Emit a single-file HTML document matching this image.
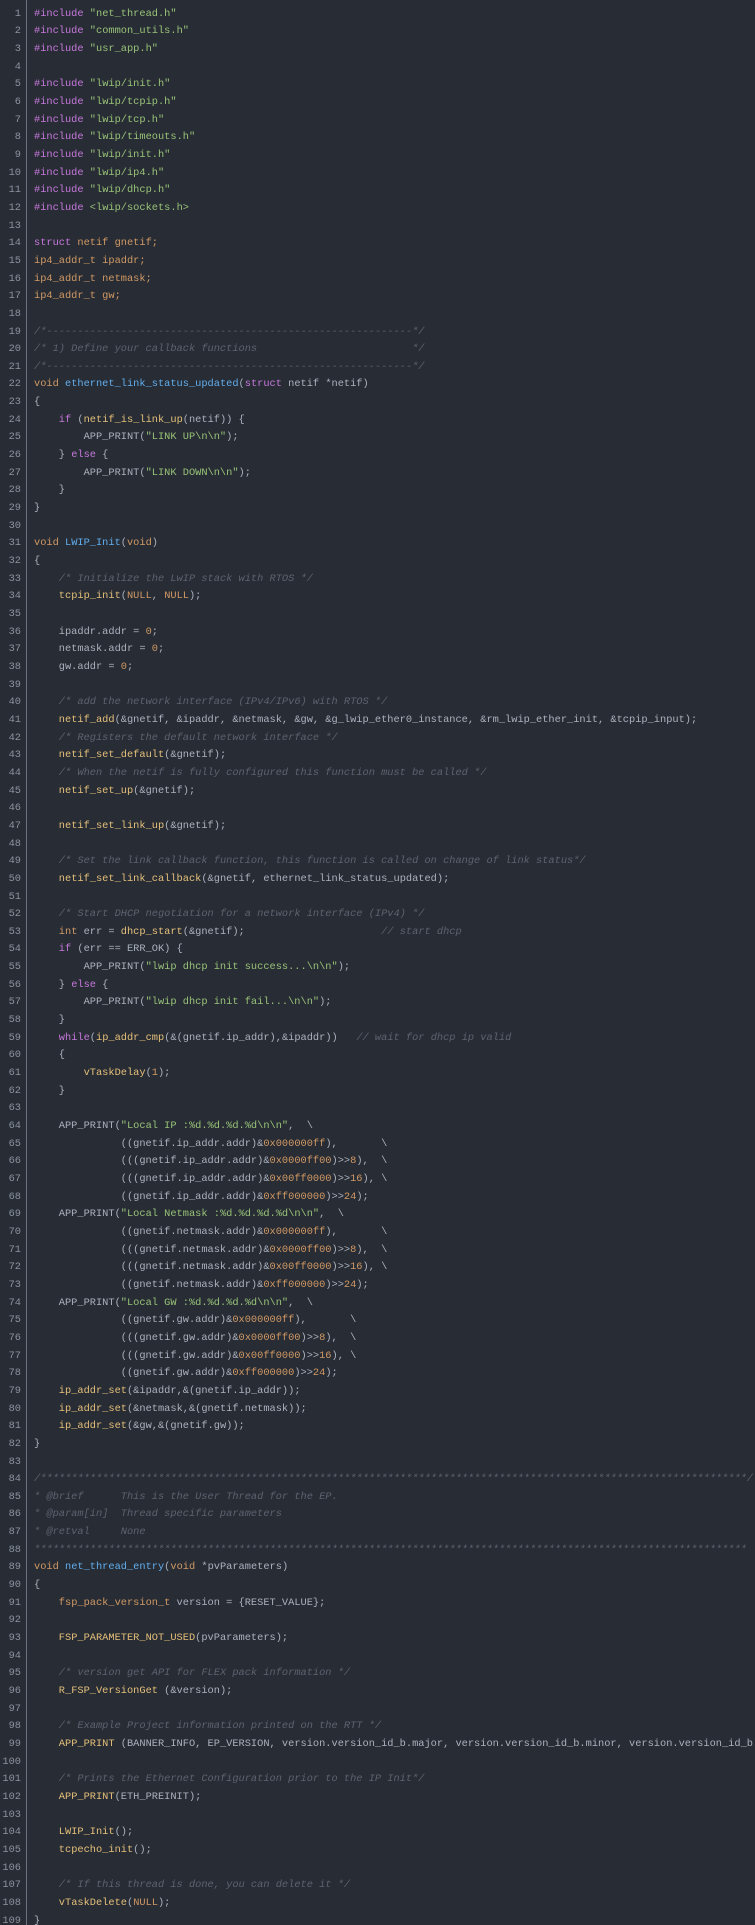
<!DOCTYPE html>
<html><head><meta charset="utf-8"><style>
html,body{margin:0;padding:0;background:#282c34;width:755px;height:1925px;overflow:hidden}
.w{position:relative;padding-top:5.7px;width:755px;overflow:hidden}
.l{height:17.66px;line-height:17.66px;font-family:"Liberation Mono",monospace;font-size:10.33px;white-space:pre;color:#abb2bf;position:relative;overflow:hidden;width:755px}
.n{position:absolute;left:0;width:21px;text-align:right;color:#8b93a1}
.x{position:absolute;left:34px}
.bar{position:absolute;left:26px;top:0;width:1px;height:1925px;background:#6b7280}
.k{color:#c678dd}.s{color:#98c379}.t{color:#d19a66}.f{color:#61afef}.c{color:#e5c07b}.m{color:#5c6370;font-style:italic}.p{color:#56b6c2}
</style></head><body><div class="bar"></div><div class="w" id="w">
<div class="l"><span class="n">1</span><span class="x"><span class="k">#include</span> <span class="s">"net_thread.h"</span></span></div>
<div class="l"><span class="n">2</span><span class="x"><span class="k">#include</span> <span class="s">"common_utils.h"</span></span></div>
<div class="l"><span class="n">3</span><span class="x"><span class="k">#include</span> <span class="s">"usr_app.h"</span></span></div>
<div class="l"><span class="n">4</span><span class="x"></span></div>
<div class="l"><span class="n">5</span><span class="x"><span class="k">#include</span> <span class="s">"lwip/init.h"</span></span></div>
<div class="l"><span class="n">6</span><span class="x"><span class="k">#include</span> <span class="s">"lwip/tcpip.h"</span></span></div>
<div class="l"><span class="n">7</span><span class="x"><span class="k">#include</span> <span class="s">"lwip/tcp.h"</span></span></div>
<div class="l"><span class="n">8</span><span class="x"><span class="k">#include</span> <span class="s">"lwip/timeouts.h"</span></span></div>
<div class="l"><span class="n">9</span><span class="x"><span class="k">#include</span> <span class="s">"lwip/init.h"</span></span></div>
<div class="l"><span class="n">10</span><span class="x"><span class="k">#include</span> <span class="s">"lwip/ip4.h"</span></span></div>
<div class="l"><span class="n">11</span><span class="x"><span class="k">#include</span> <span class="s">"lwip/dhcp.h"</span></span></div>
<div class="l"><span class="n">12</span><span class="x"><span class="k">#include</span> <span class="s">&lt;lwip/sockets.h&gt;</span></span></div>
<div class="l"><span class="n">13</span><span class="x"></span></div>
<div class="l"><span class="n">14</span><span class="x"><span class="k">struct</span> <span class="t">netif gnetif;</span></span></div>
<div class="l"><span class="n">15</span><span class="x"><span class="t">ip4_addr_t ipaddr;</span></span></div>
<div class="l"><span class="n">16</span><span class="x"><span class="t">ip4_addr_t netmask;</span></span></div>
<div class="l"><span class="n">17</span><span class="x"><span class="t">ip4_addr_t gw;</span></span></div>
<div class="l"><span class="n">18</span><span class="x"></span></div>
<div class="l"><span class="n">19</span><span class="x"><span class="m">/*-----------------------------------------------------------*/</span></span></div>
<div class="l"><span class="n">20</span><span class="x"><span class="m">/* 1) Define your callback functions                         */</span></span></div>
<div class="l"><span class="n">21</span><span class="x"><span class="m">/*-----------------------------------------------------------*/</span></span></div>
<div class="l"><span class="n">22</span><span class="x"><span class="t">void</span> <span class="f">ethernet_link_status_updated</span>(<span class="k">struct</span> netif *netif)</span></div>
<div class="l"><span class="n">23</span><span class="x">{</span></div>
<div class="l"><span class="n">24</span><span class="x">    <span class="k">if</span> (<span class="c">netif_is_link_up</span>(netif)) {</span></div>
<div class="l"><span class="n">25</span><span class="x">        APP_PRINT(<span class="s">"LINK UP\n\n"</span>);</span></div>
<div class="l"><span class="n">26</span><span class="x">    } <span class="k">else</span> {</span></div>
<div class="l"><span class="n">27</span><span class="x">        APP_PRINT(<span class="s">"LINK DOWN\n\n"</span>);</span></div>
<div class="l"><span class="n">28</span><span class="x">    }</span></div>
<div class="l"><span class="n">29</span><span class="x">}</span></div>
<div class="l"><span class="n">30</span><span class="x"></span></div>
<div class="l"><span class="n">31</span><span class="x"><span class="t">void</span> <span class="f">LWIP_Init</span>(<span class="t">void</span>)</span></div>
<div class="l"><span class="n">32</span><span class="x">{</span></div>
<div class="l"><span class="n">33</span><span class="x">    <span class="m">/* Initialize the LwIP stack with RTOS */</span></span></div>
<div class="l"><span class="n">34</span><span class="x">    <span class="c">tcpip_init</span>(<span class="t">NULL</span>, <span class="t">NULL</span>);</span></div>
<div class="l"><span class="n">35</span><span class="x"></span></div>
<div class="l"><span class="n">36</span><span class="x">    ipaddr.addr = <span class="t">0</span>;</span></div>
<div class="l"><span class="n">37</span><span class="x">    netmask.addr = <span class="t">0</span>;</span></div>
<div class="l"><span class="n">38</span><span class="x">    gw.addr = <span class="t">0</span>;</span></div>
<div class="l"><span class="n">39</span><span class="x"></span></div>
<div class="l"><span class="n">40</span><span class="x">    <span class="m">/* add the network interface (IPv4/IPv6) with RTOS */</span></span></div>
<div class="l"><span class="n">41</span><span class="x">    <span class="c">netif_add</span>(&amp;gnetif, &amp;ipaddr, &amp;netmask, &amp;gw, &amp;g_lwip_ether0_instance, &amp;rm_lwip_ether_init, &amp;tcpip_input);</span></div>
<div class="l"><span class="n">42</span><span class="x">    <span class="m">/* Registers the default network interface */</span></span></div>
<div class="l"><span class="n">43</span><span class="x">    <span class="c">netif_set_default</span>(&amp;gnetif);</span></div>
<div class="l"><span class="n">44</span><span class="x">    <span class="m">/* When the netif is fully configured this function must be called */</span></span></div>
<div class="l"><span class="n">45</span><span class="x">    <span class="c">netif_set_up</span>(&amp;gnetif);</span></div>
<div class="l"><span class="n">46</span><span class="x"></span></div>
<div class="l"><span class="n">47</span><span class="x">    <span class="c">netif_set_link_up</span>(&amp;gnetif);</span></div>
<div class="l"><span class="n">48</span><span class="x"></span></div>
<div class="l"><span class="n">49</span><span class="x">    <span class="m">/* Set the link callback function, this function is called on change of link status*/</span></span></div>
<div class="l"><span class="n">50</span><span class="x">    <span class="c">netif_set_link_callback</span>(&amp;gnetif, ethernet_link_status_updated);</span></div>
<div class="l"><span class="n">51</span><span class="x"></span></div>
<div class="l"><span class="n">52</span><span class="x">    <span class="m">/* Start DHCP negotiation for a network interface (IPv4) */</span></span></div>
<div class="l"><span class="n">53</span><span class="x">    <span class="t">int</span> err = <span class="c">dhcp_start</span>(&amp;gnetif);                      <span class="m">// start dhcp</span></span></div>
<div class="l"><span class="n">54</span><span class="x">    <span class="k">if</span> (err == ERR_OK) {</span></div>
<div class="l"><span class="n">55</span><span class="x">        APP_PRINT(<span class="s">"lwip dhcp init success...\n\n"</span>);</span></div>
<div class="l"><span class="n">56</span><span class="x">    } <span class="k">else</span> {</span></div>
<div class="l"><span class="n">57</span><span class="x">        APP_PRINT(<span class="s">"lwip dhcp init fail...\n\n"</span>);</span></div>
<div class="l"><span class="n">58</span><span class="x">    }</span></div>
<div class="l"><span class="n">59</span><span class="x">    <span class="k">while</span>(<span class="c">ip_addr_cmp</span>(&amp;(gnetif.ip_addr),&amp;ipaddr))   <span class="m">// wait for dhcp ip valid</span></span></div>
<div class="l"><span class="n">60</span><span class="x">    {</span></div>
<div class="l"><span class="n">61</span><span class="x">        <span class="c">vTaskDelay</span>(<span class="t">1</span>);</span></div>
<div class="l"><span class="n">62</span><span class="x">    }</span></div>
<div class="l"><span class="n">63</span><span class="x"></span></div>
<div class="l"><span class="n">64</span><span class="x">    APP_PRINT(<span class="s">"Local IP :%d.%d.%d.%d\n\n"</span>,  \</span></div>
<div class="l"><span class="n">65</span><span class="x">              ((gnetif.ip_addr.addr)&amp;<span class="t">0x000000ff</span>),       \</span></div>
<div class="l"><span class="n">66</span><span class="x">              (((gnetif.ip_addr.addr)&amp;<span class="t">0x0000ff00</span>)&gt;&gt;<span class="t">8</span>),  \</span></div>
<div class="l"><span class="n">67</span><span class="x">              (((gnetif.ip_addr.addr)&amp;<span class="t">0x00ff0000</span>)&gt;&gt;<span class="t">16</span>), \</span></div>
<div class="l"><span class="n">68</span><span class="x">              ((gnetif.ip_addr.addr)&amp;<span class="t">0xff000000</span>)&gt;&gt;<span class="t">24</span>);</span></div>
<div class="l"><span class="n">69</span><span class="x">    APP_PRINT(<span class="s">"Local Netmask :%d.%d.%d.%d\n\n"</span>,  \</span></div>
<div class="l"><span class="n">70</span><span class="x">              ((gnetif.netmask.addr)&amp;<span class="t">0x000000ff</span>),       \</span></div>
<div class="l"><span class="n">71</span><span class="x">              (((gnetif.netmask.addr)&amp;<span class="t">0x0000ff00</span>)&gt;&gt;<span class="t">8</span>),  \</span></div>
<div class="l"><span class="n">72</span><span class="x">              (((gnetif.netmask.addr)&amp;<span class="t">0x00ff0000</span>)&gt;&gt;<span class="t">16</span>), \</span></div>
<div class="l"><span class="n">73</span><span class="x">              ((gnetif.netmask.addr)&amp;<span class="t">0xff000000</span>)&gt;&gt;<span class="t">24</span>);</span></div>
<div class="l"><span class="n">74</span><span class="x">    APP_PRINT(<span class="s">"Local GW :%d.%d.%d.%d\n\n"</span>,  \</span></div>
<div class="l"><span class="n">75</span><span class="x">              ((gnetif.gw.addr)&amp;<span class="t">0x000000ff</span>),       \</span></div>
<div class="l"><span class="n">76</span><span class="x">              (((gnetif.gw.addr)&amp;<span class="t">0x0000ff00</span>)&gt;&gt;<span class="t">8</span>),  \</span></div>
<div class="l"><span class="n">77</span><span class="x">              (((gnetif.gw.addr)&amp;<span class="t">0x00ff0000</span>)&gt;&gt;<span class="t">16</span>), \</span></div>
<div class="l"><span class="n">78</span><span class="x">              ((gnetif.gw.addr)&amp;<span class="t">0xff000000</span>)&gt;&gt;<span class="t">24</span>);</span></div>
<div class="l"><span class="n">79</span><span class="x">    <span class="c">ip_addr_set</span>(&amp;ipaddr,&amp;(gnetif.ip_addr));</span></div>
<div class="l"><span class="n">80</span><span class="x">    <span class="c">ip_addr_set</span>(&amp;netmask,&amp;(gnetif.netmask));</span></div>
<div class="l"><span class="n">81</span><span class="x">    <span class="c">ip_addr_set</span>(&amp;gw,&amp;(gnetif.gw));</span></div>
<div class="l"><span class="n">82</span><span class="x">}</span></div>
<div class="l"><span class="n">83</span><span class="x"></span></div>
<div class="l"><span class="n">84</span><span class="x"><span class="m">/******************************************************************************************************************/</span></span></div>
<div class="l"><span class="n">85</span><span class="x"><span class="m">* @brief      This is the User Thread for the EP.</span></span></div>
<div class="l"><span class="n">86</span><span class="x"><span class="m">* @param[in]  Thread specific parameters</span></span></div>
<div class="l"><span class="n">87</span><span class="x"><span class="m">* @retval     None</span></span></div>
<div class="l"><span class="n">88</span><span class="x"><span class="m">*******************************************************************************************************************</span></span></div>
<div class="l"><span class="n">89</span><span class="x"><span class="t">void</span> <span class="f">net_thread_entry</span>(<span class="t">void</span> *pvParameters)</span></div>
<div class="l"><span class="n">90</span><span class="x">{</span></div>
<div class="l"><span class="n">91</span><span class="x">    <span class="t">fsp_pack_version_t</span> version = {RESET_VALUE};</span></div>
<div class="l"><span class="n">92</span><span class="x"></span></div>
<div class="l"><span class="n">93</span><span class="x">    <span class="c">FSP_PARAMETER_NOT_USED</span>(pvParameters);</span></div>
<div class="l"><span class="n">94</span><span class="x"></span></div>
<div class="l"><span class="n">95</span><span class="x">    <span class="m">/* version get API for FLEX pack information */</span></span></div>
<div class="l"><span class="n">96</span><span class="x">    <span class="c">R_FSP_VersionGet</span> (&amp;version);</span></div>
<div class="l"><span class="n">97</span><span class="x"></span></div>
<div class="l"><span class="n">98</span><span class="x">    <span class="m">/* Example Project information printed on the RTT */</span></span></div>
<div class="l"><span class="n">99</span><span class="x">    <span class="c">APP_PRINT</span> (BANNER_INFO, EP_VERSION, version.version_id_b.major, version.version_id_b.minor, version.version_id_b.</span></div>
<div class="l"><span class="n">100</span><span class="x"></span></div>
<div class="l"><span class="n">101</span><span class="x">    <span class="m">/* Prints the Ethernet Configuration prior to the IP Init*/</span></span></div>
<div class="l"><span class="n">102</span><span class="x">    <span class="c">APP_PRINT</span>(ETH_PREINIT);</span></div>
<div class="l"><span class="n">103</span><span class="x"></span></div>
<div class="l"><span class="n">104</span><span class="x">    <span class="c">LWIP_Init</span>();</span></div>
<div class="l"><span class="n">105</span><span class="x">    <span class="c">tcpecho_init</span>();</span></div>
<div class="l"><span class="n">106</span><span class="x"></span></div>
<div class="l"><span class="n">107</span><span class="x">    <span class="m">/* If this thread is done, you can delete it */</span></span></div>
<div class="l"><span class="n">108</span><span class="x">    <span class="c">vTaskDelete</span>(<span class="t">NULL</span>);</span></div>
<div class="l"><span class="n">109</span><span class="x">}</span></div>
</div></body></html>
